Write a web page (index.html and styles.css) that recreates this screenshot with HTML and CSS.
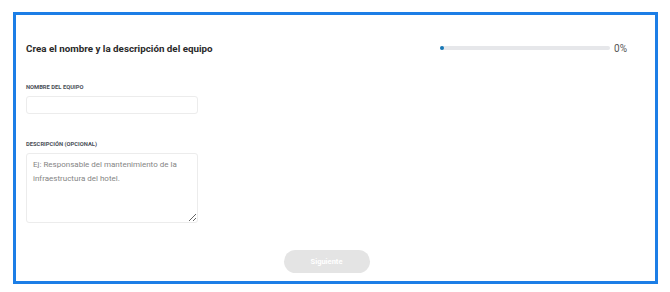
FILE: index.html
```html
<!DOCTYPE html>
<html lang="es">
<head>
  <meta charset="UTF-8">
  <title>Crear equipo</title>
  <link rel="stylesheet" href="styles.css">
</head>
<body>

<div class="frame">
  <div class="header">
    <h2 class="title">Crea el nombre y la descripción del equipo</h2>
    <div class="progress">
      <div class="progress-track"><div class="progress-fill"></div></div>
      <span class="progress-value">0%</span>
    </div>
  </div>

  <div class="field">
    <label class="field-label">Nombre del equipo</label>
    <input class="field-input" type="text">
  </div>

  <div class="field field-desc">
    <label class="field-label">Descripción (opcional)</label>
    <textarea class="field-textarea" placeholder="Ej: Responsable del mantenimiento de la infraestructura del hotel."></textarea>
  </div>

  <div class="actions">
    <button class="next-btn" disabled>Siguiente</button>
  </div>
</div>

</body>
</html>
```

FILE: styles.css
```css
body {
  margin: 0;
  background: #fff;
  font-family: Roboto, 'Liberation Sans', sans-serif;
  color: #2b2b2b;
}

.frame {
  box-sizing: border-box;
  width: 645px;
  height: 272px;
  margin: 12px 0 0 13px;
  border: 3px solid #1c7ee6;
  padding: 0 28px 0 10px;
  display: flex;
  flex-direction: column;
}

.header {
  display: flex;
  align-items: center;
  height: 14px;
  margin-top: 26px;
}

.title {
  margin: 0;
  font-size: 9.8px;
  font-weight: 700;
  color: #2a2a2a;
}

.progress {
  margin-left: auto;
  display: flex;
  align-items: center;
  gap: 4px;
}

.progress-track {
  width: 170px;
  height: 4px;
  border-radius: 2px;
  background: #e6e7ea;
  position: relative;
}

.progress-fill {
  position: absolute;
  left: 0;
  top: 0;
  width: 4px;
  height: 4px;
  border-radius: 50%;
  background: #1677b5;
}

.progress-value {
  font-size: 10px;
  color: #555;
}

.field {
  display: flex;
  flex-direction: column;
  margin-top: 28px;
}

.field-desc {
  margin-top: 26px;
}

.field-label {
  font-size: 5.8px;
  font-weight: 700;
  text-transform: uppercase;
  color: #4a4f57;
  line-height: 8px;
  margin-bottom: 5px;
}

.field-input,
.field-textarea {
  box-sizing: border-box;
  width: 172px;
  border: 1px solid #ececec;
  border-radius: 3px;
  background: #fff;
  outline: none;
}

.field-input {
  height: 18px;
}

.field-textarea {
  height: 70px;
  padding: 4px 6px;
  font-family: Roboto, 'Liberation Sans', sans-serif;
  font-size: 8px;
  line-height: 14px;
  resize: vertical;
}

.field-textarea::placeholder {
  color: #858585;
}

.actions {
  display: flex;
  justify-content: center;
  margin-top: 27px;
}

.next-btn {
  width: 86px;
  height: 23px;
  border: none;
  border-radius: 12px;
  background: #e4e4e4;
  color: #fff;
  font-family: Roboto, 'Liberation Sans', sans-serif;
  font-size: 7.5px;
  font-weight: 700;
}
```
